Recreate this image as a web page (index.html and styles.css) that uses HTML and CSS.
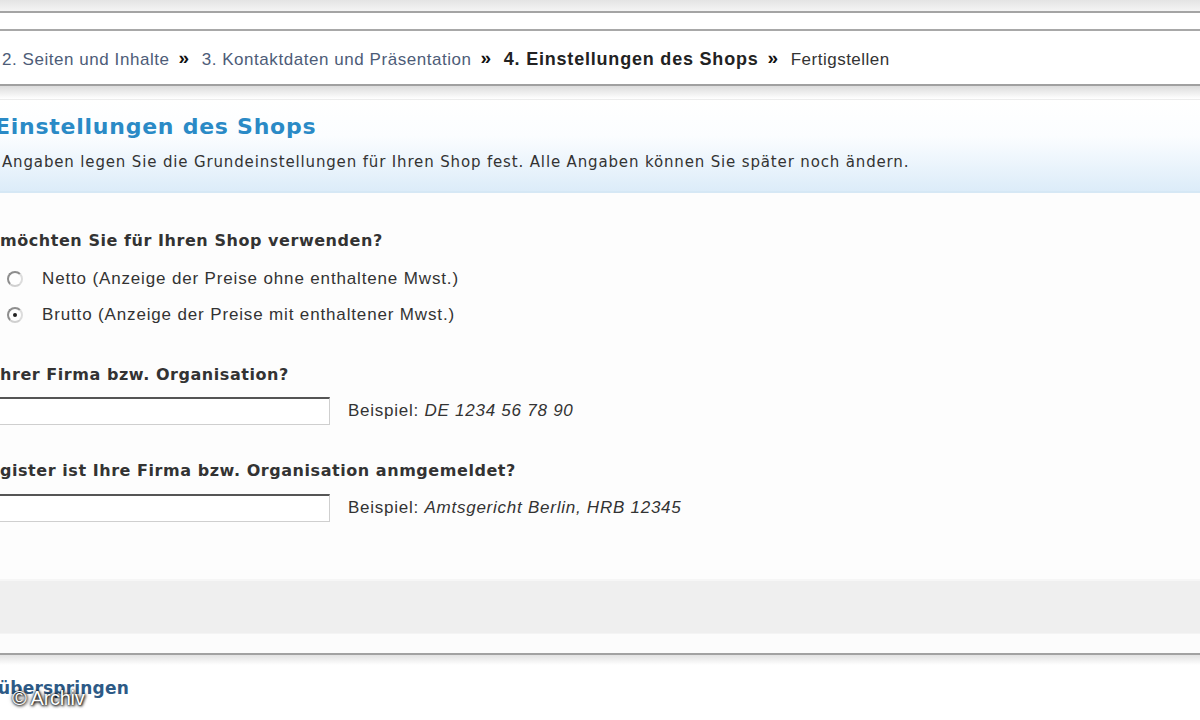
FILE: index.html
```html
<!DOCTYPE html>
<html lang="de">
<head>
<meta charset="utf-8">
<title>Einstellungen des Shops</title>
<link rel="stylesheet" href="styles.css">
</head>
<body>
<div class="page">
  <div class="topfade"></div>
  <div class="strip"></div>
  <nav class="crumbs">
    <a class="crumb" href="#">2. Seiten und Inhalte</a>
    <span class="sep">&raquo;</span>
    <a class="crumb" href="#">3. Kontaktdaten und Präsentation</a>
    <span class="sep">&raquo;</span>
    <span class="crumb current">4. Einstellungen des Shops</span>
    <span class="sep">&raquo;</span>
    <span class="crumb plain">Fertigstellen</span>
  </nav>
  <div class="shadow"></div>
  <header class="head">
    <h1 class="title">Einstellungen des Shops</h1>
    <p class="desc">Angaben legen Sie die Grundeinstellungen für Ihren Shop fest. Alle Angaben können Sie später noch ändern.</p>
  </header>
  <main class="form">
    <section class="q q1">
      <h2 class="qtitle">möchten Sie für Ihren Shop verwenden?</h2>
      <label class="opt"><span class="radio"></span><span>Netto (Anzeige der Preise ohne enthaltene Mwst.)</span></label>
      <label class="opt"><span class="radio on"></span><span>Brutto (Anzeige der Preise mit enthaltener Mwst.)</span></label>
    </section>
    <section class="q q2">
      <h2 class="qtitle">hrer Firma bzw. Organisation?</h2>
      <div class="row"><span class="input"></span><span class="hint">Beispiel: <em>DE 1234 56 78 90</em></span></div>
    </section>
    <section class="q q3">
      <h2 class="qtitle">gister ist Ihre Firma bzw. Organisation anmgemeldet?</h2>
      <div class="row"><span class="input"></span><span class="hint">Beispiel: <em>Amtsgericht Berlin, HRB 12345</em></span></div>
    </section>
  </main>
  <div class="bar"></div>
  <div class="barbelow"></div>
  <div class="shadow2"></div>
  <footer class="foot">
    <a class="skip" href="#">überspringen</a>
    <span class="mark">© Archiv</span>
  </footer>
</div>
</body>
</html>
```
FILE: styles.css
```css
html, body {
  margin: 0;
  padding: 0;
  background: #ffffff;
  overflow: hidden;
}
.page {
  width: 1200px;
  height: 720px;
  overflow: hidden;
  font-family: "Liberation Sans", Arial, sans-serif;
  color: #333;
}
.topfade {
  height: 11px;
  background: linear-gradient(#e4e4e4, #f4f4f4);
  border-bottom: 2px solid #a4a4a4;
}
.strip {
  height: 16px;
  background: #fff;
  border-bottom: 2px solid #a8a8a8;
}
.crumbs {
  height: 55px;
  box-sizing: border-box;
  padding: 4px 0 0 2px;
  display: flex;
  align-items: center;
  background: #fff;
  font-size: 17px;
  letter-spacing: 0.55px;
  border-bottom: 2px solid #a0a0a0;
}
.crumb {
  color: #4d5c78;
  text-decoration: none;
}
.crumb.current {
  color: #222;
  font-weight: bold;
  font-size: 18px;
  letter-spacing: 0.8px;
}
.crumb.plain {
  color: #333;
  letter-spacing: 0.5px;
}
.sep {
  font-weight: bold;
  font-size: 19px;
  color: #111;
  margin: 0 12px 4px 9px;
  line-height: 1;
}
.shadow {
  height: 13px;
  background: linear-gradient(#dcdcdc, #ffffff);
  border-bottom: 1px solid #ececec;
}
.head {
  height: 93px;
  box-sizing: border-box;
  padding-top: 12px;
  background: linear-gradient(#ffffff 0%, #fbfdff 40%, #dcecf9 100%);
  border-bottom: 2px solid #d6e8f5;
}
.title {
  margin: 0 0 0 -5px;
  font-family: "DejaVu Sans", Verdana, sans-serif;
  font-size: 22px;
  font-weight: bold;
  color: #2a8ac6;
  line-height: 30px;
  letter-spacing: 0.75px;
}
.desc {
  margin: 10px 0 0 2px;
  font-family: "DejaVu Sans", Verdana, sans-serif;
  font-size: 15px;
  color: #333;
  line-height: 20px;
  letter-spacing: 0.85px;
}
.form {
  height: 386px;
  box-sizing: border-box;
  background: #fdfdfd;
  padding-top: 38px;
}
.qtitle {
  margin: 0;
  font-family: "DejaVu Sans", Verdana, sans-serif;
  font-size: 16px;
  font-weight: bold;
  color: #333;
  line-height: 20px;
  letter-spacing: 0.55px;
}
.q1 .qtitle { margin-bottom: 10px; }
.opt {
  display: flex;
  align-items: center;
  height: 36px;
  font-size: 17px;
  letter-spacing: 0.85px;
  color: #333;
}
.radio {
  width: 16px;
  height: 16px;
  box-sizing: border-box;
  border-radius: 50%;
  border: 2px solid #8e8e8e;
  border-right-color: #dcdcdc;
  border-bottom-color: #d0d0d0;
  background: #fff;
  margin: 0 19px 0 7px;
  position: relative;
}
.radio.on::after {
  content: "";
  position: absolute;
  left: 4px;
  top: 4px;
  width: 4px;
  height: 4px;
  border-radius: 50%;
  background: #222;
}
.q2 { margin-top: 32px; }
.q3 { margin-top: 36px; }
.row {
  display: flex;
  align-items: center;
  margin-top: 12px;
}
.q3 .row { margin-top: 13px; }
.input {
  display: block;
  width: 332px;
  height: 28px;
  box-sizing: border-box;
  margin-left: -2px;
  background: #fff;
  border-top: 2px solid #555;
  border-left: 2px solid #555;
  border-right: 1px solid #cfcfcf;
  border-bottom: 1px solid #cfcfcf;
}
.hint {
  margin-left: 18px;
  font-size: 17px;
  letter-spacing: 0.75px;
  color: #333;
}
.bar {
  height: 52px;
  background: #efefef;
  border-top: 2px solid #f6f6f6;
  border-bottom: 1px solid #f4f4f4;
}
.barbelow {
  height: 19px;
  background: #fcfcfc;
  border-bottom: 2px solid #a2a2a2;
}
.shadow2 {
  height: 10px;
  background: linear-gradient(#e2e2e2, #ffffff);
}
.foot {
  position: relative;
  height: 60px;
  padding-top: 13px;
  box-sizing: border-box;
}
.skip {
  font-family: "DejaVu Sans", Verdana, sans-serif;
  font-size: 17px;
  font-weight: bold;
  color: #2d5a86;
  text-decoration: none;
  margin-left: -2px;
  letter-spacing: 0.2px;
}
.mark {
  position: absolute;
  left: 12px;
  top: 22px;
  font-size: 20px;
  color: #ffffff;
  letter-spacing: -0.3px;
  text-shadow: 0 0 2px #000, 1px 1px 3px #000, 0 0 4px rgba(0,0,0,0.6);
}
```
